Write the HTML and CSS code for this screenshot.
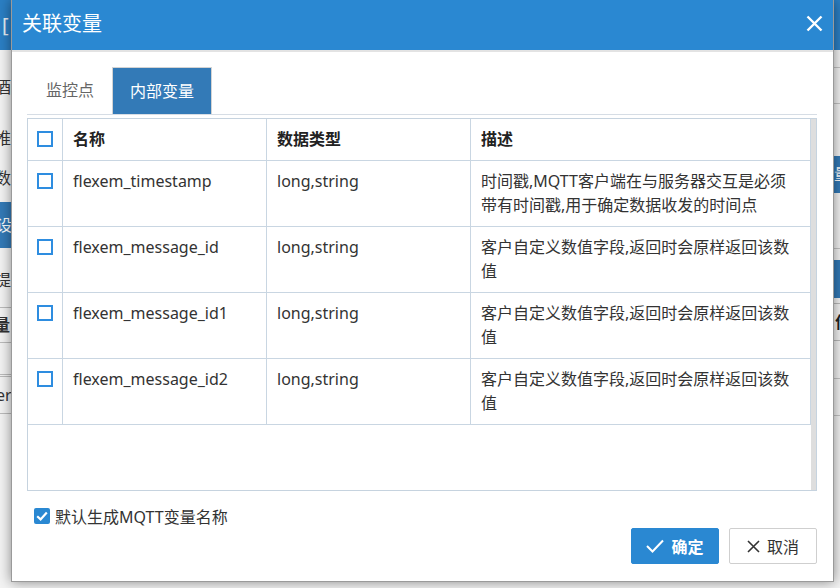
FILE: index.html
```html
<!DOCTYPE html>
<html lang="zh-CN">
<head>
<meta charset="utf-8">
<title>关联变量</title>
<link rel="stylesheet" href="styles.css">
</head>
<body>
<div class="page">
  <div class="page-head"><span class="page-head-text">[</span></div>
  <div class="page-main">
    <div class="page-left">
      <div class="pl-item pl-1">酒</div>
      <div class="pl-item pl-2">推</div>
      <div class="pl-item pl-3">数</div>
      <div class="pl-band">设</div>
      <div class="pl-item pl-4">提</div>
      <div class="pl-th">量</div>
      <div class="pl-td">er</div>
    </div>
    <div class="page-right">
      <div class="pr-line pr-1"></div>
      <div class="pr-line pr-2"></div>
      <div class="pr-band pr-b1">量</div>
      <div class="pr-line pr-3"></div>
      <div class="pr-band pr-b2"></div>
      <div class="pr-th">作</div>
      <div class="pr-line pr-4"></div>
      <div class="pr-line pr-5"></div>
    </div>
  </div>
</div>

<div class="dialog">
  <div class="dlg-head">
    <span class="dlg-title">关联变量</span>
    <span class="dlg-close">
      <svg width="17" height="17" viewBox="0 0 17 17"><path d="M1.5 1.5 L15.5 15.5 M15.5 1.5 L1.5 15.5" stroke="#fff" stroke-width="2.4" fill="none"/></svg>
    </span>
  </div>
  <div class="dlg-body">
    <div class="tabs">
      <span class="tab">监控点</span>
      <span class="tab tab-active">内部变量</span>
    </div>
    <div class="grid">
      <div class="grid-table">
        <div class="row row-head">
          <div class="cell cell-cb"><span class="cb"></span></div>
          <div class="cell">名称</div>
          <div class="cell">数据类型</div>
          <div class="cell">描述</div>
        </div>
        <div class="row">
          <div class="cell cell-cb"><span class="cb"></span></div>
          <div class="cell">flexem_timestamp</div>
          <div class="cell">long,string</div>
          <div class="cell">时间戳,MQTT客户端在与服务器交互是必须带有时间戳,用于确定数据收发的时间点</div>
        </div>
        <div class="row">
          <div class="cell cell-cb"><span class="cb"></span></div>
          <div class="cell">flexem_message_id</div>
          <div class="cell">long,string</div>
          <div class="cell">客户自定义数值字段,返回时会原样返回该数值</div>
        </div>
        <div class="row">
          <div class="cell cell-cb"><span class="cb"></span></div>
          <div class="cell">flexem_message_id1</div>
          <div class="cell">long,string</div>
          <div class="cell">客户自定义数值字段,返回时会原样返回该数值</div>
        </div>
        <div class="row">
          <div class="cell cell-cb"><span class="cb"></span></div>
          <div class="cell">flexem_message_id2</div>
          <div class="cell">long,string</div>
          <div class="cell">客户自定义数值字段,返回时会原样返回该数值</div>
        </div>
      </div>
      <div class="grid-strip"></div>
    </div>
    <label class="gen">
      <span class="cb-checked">
        <svg width="16" height="16" viewBox="0 0 16 16"><polyline points="3.2,8.2 6.6,11.4 12.8,4.4" stroke="#fff" stroke-width="2.2" fill="none"/></svg>
      </span>
      <span>默认生成MQTT变量名称</span>
    </label>
    <div class="actions">
      <button class="btn btn-primary">
        <svg width="18" height="14" viewBox="0 0 18 14"><polyline points="1,7 6.5,12.5 17,1.5" stroke="#fff" stroke-width="2" fill="none"/></svg>
        <span>确定</span>
      </button>
      <button class="btn btn-default">
        <svg width="13" height="13" viewBox="0 0 13 13"><path d="M1 1 L12 12 M12 1 L1 12" stroke="#333" stroke-width="1.6" fill="none"/></svg>
        <span>取消</span>
      </button>
    </div>
  </div>
</div>
</body>
</html>
```
FILE: styles.css
```css
* { box-sizing: border-box; }
html, body { margin: 0; padding: 0; }
body {
  width: 840px;
  height: 588px;
  overflow: hidden;
  position: relative;
  font-family: "Noto Sans", "Noto Sans CJK SC", sans-serif;
  font-size: 16px;
  color: #333;
  background: #f3f3f3;
}

/* background page */
.page { width: 840px; height: 588px; }
.page-head {
  height: 50px;
  background: #2b7fc4;
  color: #e8eef5;
  font-size: 20px;
  line-height: 50px;
  padding-left: 2px;
}
.page-main { display: flex; justify-content: space-between; }
.page-left { width: 200px; }
.pl-item { height: 24px; line-height: 24px; text-indent: -5px; color: #333; }
.pl-1 { margin-top: 25px; }
.pl-2 { margin-top: 27px; }
.pl-3 { margin-top: 16px; }
.pl-band {
  margin-top: 12px; height: 46px; line-height: 46px;
  background: #337ab7; color: #fff; text-indent: -4px;
}
.pl-4 { margin-top: 20px; }
.pl-th {
  margin-top: 15px; height: 36px; line-height: 34px;
  border-top: 1px solid #bbb; border-bottom: 1px solid #bbb;
  font-weight: bold; text-indent: -6px;
}
.pl-td {
  margin-top: 31px; height: 40px; line-height: 36px;
  border-top: 3px double #bbb; border-bottom: 1px solid #bbb;
  text-indent: -4px;
}
.page-right { width: 60px; }
.pr-line { height: 1px; background: #c4c4c4; }
.pr-1 { margin-top: 17px; }
.pr-2 { margin-top: 35px; }
.pr-band { background: #337ab7; color: #fff; text-indent: 54px; }
.pr-b1 { margin-top: 52px; height: 37px; line-height: 37px; }
.pr-3 { margin-top: 55px; }
.pr-b2 { margin-top: 11px; height: 38px; }
.pr-th {
  margin-top: 5px; height: 38px; line-height: 36px;
  border-top: 1px solid #bbb; border-bottom: 1px solid #bbb;
  font-weight: bold; color: #222; text-indent: 55px;
}
.pr-4 { margin-top: 37px; }
.pr-5 { margin-top: 36px; }

/* dialog overlay */
.dialog {
  position: absolute;
  left: 11px;
  top: 0;
  width: 823px;
  height: 582px;
  background: #fff;
  border: 1px solid #9a9a9a;
  border-top: 0;
  box-shadow: 0 0 12px rgba(0, 0, 0, 0.45);
  display: flex;
  flex-direction: column;
}
.dlg-head {
  height: 52px;
  background: #2a88d2;
  border-bottom: 2px solid #e3e3e3;
  display: flex;
  align-items: center;
  justify-content: space-between;
  padding: 0 10px 2px 10px;
}
.dlg-title { color: #fff; font-size: 20px; line-height: 50px; }
.dlg-close { display: flex; width: 17px; height: 17px; margin-top: -2px; }

.dlg-body {
  flex: 1;
  display: flex;
  flex-direction: column;
  padding: 15px 16px 17px 15px;
}

.tabs {
  display: flex;
  height: 48px;
  border-bottom: 1px solid #d6dde5;
}
.tab {
  height: 47px;
  line-height: 47px;
  padding: 0 18px 0 19px;
  color: #666;
  font-size: 16px;
}
.tab-active {
  background: #337ab7;
  color: #fff;
  border: 1px solid #d3d3d3;
  border-bottom: 0;
  padding: 0 17px;
  line-height: 46px;
  width: 100px;
}

.grid {
  margin-top: 3px;
  height: 373px;
  border: 1px solid #c6d3df;
  display: flex;
}
.grid-table { width: 783px; }
.grid-strip { flex: 1; background: #dedede; }

.row {
  display: grid;
  grid-template-columns: 35px 204px 204px 340px;
}
.cell {
  border-right: 1px solid #c9d6e2;
  border-bottom: 1px solid #c9d6e2;
  padding: 8px 10px 9px 10px;
  line-height: 24px;
  font-size: 16px;
  color: #333;
}
.row-head .cell { font-weight: bold; color: #222; }
.cell-cb { padding: 12px 0 0 9px; }
.cb {
  display: block;
  width: 16px;
  height: 16px;
  border: 2px solid #2e8de0;
  background: #fff;
}

.gen {
  margin-top: 13px;
  height: 24px;
  display: flex;
  align-items: center;
  gap: 5px;
  padding-left: 7px;
  font-size: 16px;
  color: #333;
}
.cb-checked {
  display: flex;
  width: 16px;
  height: 16px;
  background: #2a88d2;
  border-radius: 2px;
}

.actions {
  display: flex;
  justify-content: flex-end;
  gap: 10px;
}
.btn {
  width: 88px;
  height: 36px;
  border-radius: 2px;
  font-family: "Noto Sans", "Noto Sans CJK SC", sans-serif;
  font-size: 16px;
  display: flex;
  align-items: center;
  justify-content: center;
  gap: 7px;
  padding: 0;
  cursor: pointer;
}
.btn-primary {
  background: #2a88d2;
  border: 1px solid #2a88d2;
  color: #fff;
  font-weight: bold;
}
.btn-default {
  background: #fff;
  border: 1px solid #cfcfcf;
  color: #333;
}
```
